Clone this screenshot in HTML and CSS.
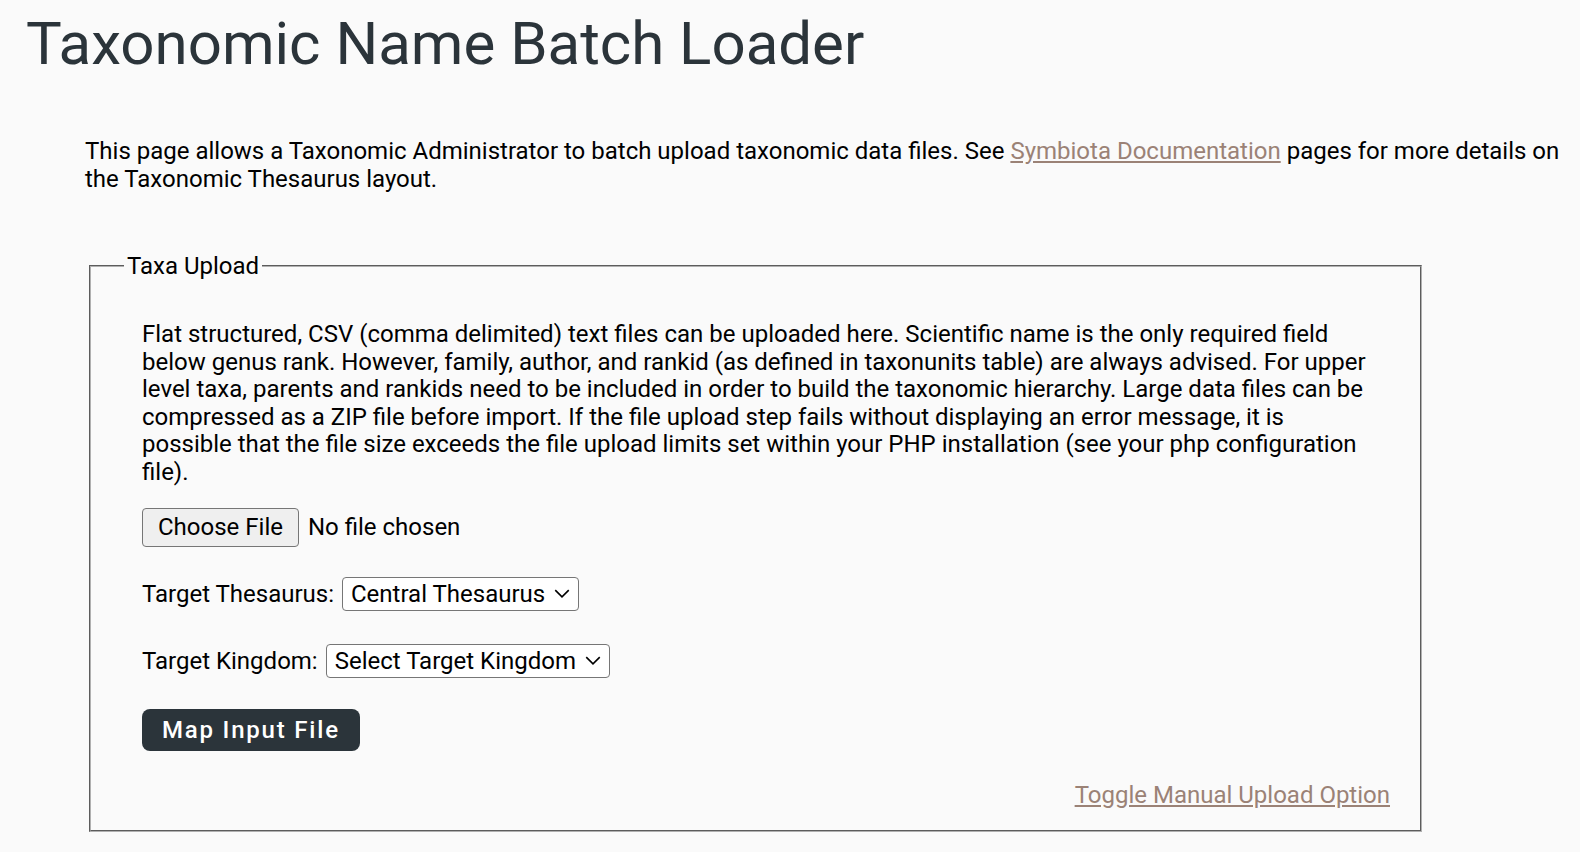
FILE: index.html
```html
<!DOCTYPE html>
<html lang="en">
<head>
<meta charset="utf-8">
<title>Taxonomic Name Batch Loader</title>
<link rel="stylesheet" href="styles.css">
</head>
<body>
<h1 class="page-title">Taxonomic Name Batch Loader</h1>
<div class="intro">
  This page allows a Taxonomic Administrator to batch upload taxonomic data files. See <a href="#" class="link">Symbiota Documentation</a> pages for more details on the Taxonomic Thesaurus layout.
</div>
<form class="upload-form">
  <fieldset class="upload-fieldset">
    <legend class="legend">Taxa Upload</legend>
    <div class="fs-body">
      <p class="desc">Flat structured, CSV (comma delimited) text files can be uploaded here. Scientific name is the only required field below genus rank. However, family, author, and rankid (as defined in taxonunits table) are always advised. For upper level taxa, parents and rankids need to be included in order to build the taxonomic hierarchy. Large data files can be compressed as a ZIP file before import. If the file upload step fails without displaying an error message, it is possible that the file size exceeds the file upload limits set within your PHP installation (see your php configuration file).</p>
      <div class="row file-row">
        <span class="file-btn">Choose File</span>
        <span class="file-status">No file chosen</span>
      </div>
      <div class="row thes-row">
        <label class="label">Target Thesaurus:</label>
        <span class="select">Central Thesaurus<svg class="chev" viewBox="0 0 14 8" width="16" height="9"><path d="M1 1l6 6 6-6" fill="none" stroke="#000" stroke-width="1.4"/></svg></span>
      </div>
      <div class="row king-row">
        <label class="label">Target Kingdom:</label>
        <span class="select">Select Target Kingdom<svg class="chev" viewBox="0 0 14 8" width="16" height="9"><path d="M1 1l6 6 6-6" fill="none" stroke="#000" stroke-width="1.4"/></svg></span>
      </div>
      <div class="row map-row">
        <button type="button" class="primary-btn">Map Input File</button>
      </div>
      <div class="toggle-row">
        <a href="#" class="link">Toggle Manual Upload Option</a>
      </div>
    </div>
  </fieldset>
</form>
</body>
</html>
```

FILE: styles.css
```css
html, body {
  margin: 0;
  padding: 0;
  background: #fafafa;
}
body {
  font-family: Roboto, "Liberation Sans", sans-serif;
  font-size: 24px;
  color: #000;
}
.page-title {
  margin: 0;
  padding: 8px 0 0 26px;
  font-size: 60px;
  font-weight: 400;
  color: #2b343a;
  line-height: 72px;
}
.intro {
  margin: 57px 20px 0 85px;
  line-height: 28px;
}
.link {
  color: #9b8276;
  text-decoration: underline;
}
.upload-form {
  margin: 59px 0 0 89px;
  width: 1333px;
}
.upload-fieldset {
  margin: 0;
  border: 2px groove #b0b0b0;
  padding: 0 30px 21px 30px;
}
.legend {
  margin-left: 3px;
  padding: 0 3px;
}
.fs-body {
  padding-left: 21px;
}
.desc {
  margin: 41px 18px 0 0;
  line-height: 27.6px;
}
.row {
  display: flex;
  align-items: center;
}
.file-row {
  margin-top: 21px;
}
.thes-row {
  margin-top: 30px;
}
.king-row {
  margin-top: 33px;
}
.map-row {
  margin-top: 31px;
}
.file-btn {
  display: inline-flex;
  align-items: center;
  box-sizing: border-box;
  height: 39px;
  padding: 0 15px;
  background: #efefef;
  border: 1.5px solid #767676;
  border-radius: 4px;
}
.file-status {
  margin-left: 9px;
}
.label {
  margin-right: 8px;
}
.select {
  display: inline-flex;
  align-items: center;
  box-sizing: border-box;
  height: 34px;
  padding: 0 8px 0 8px;
  background: #fff;
  border: 1.5px solid #767676;
  border-radius: 4px;
}
.chev {
  margin-left: 9px;
}
.primary-btn {
  font-family: Roboto, "Liberation Sans", sans-serif;
  font-size: 24px;
  font-weight: 500;
  letter-spacing: 1.8px;
  color: #fff;
  background: #2b343a;
  border: none;
  border-radius: 8px;
  height: 42px;
  padding: 0 20px;
}
.toggle-row {
  display: flex;
  justify-content: flex-end;
  margin-top: 30px;
  line-height: 28px;
}
```
